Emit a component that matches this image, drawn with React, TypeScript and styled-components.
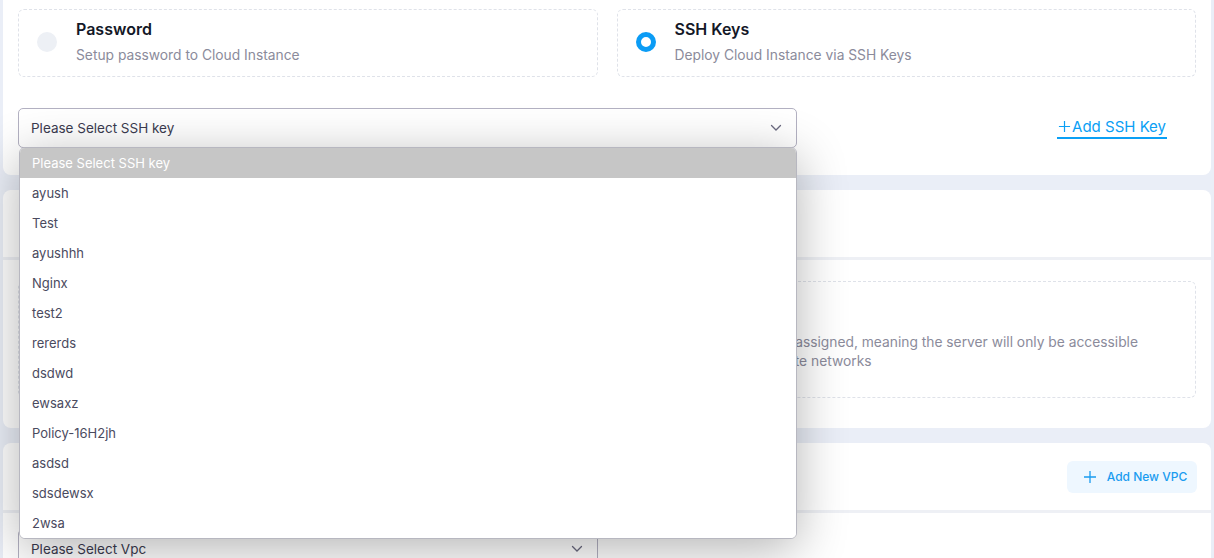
import * as React from 'react'
import styled, { createGlobalStyle } from 'styled-components'

const GlobalStyle = createGlobalStyle`
  body {
    margin: 0;
    background: #eaeef7;
    font-family: Inter, "Open Sans", sans-serif;
  }
`

const Page = styled.div`
  position: relative;
  height: 558px;
  overflow: hidden;
  padding: 0 3px;
  display: flex;
  flex-direction: column;
  gap: 15px;
`

const Card = styled.div<{ $cutTop?: boolean }>`
  background: #fff;
  border-radius: ${p => (p.$cutTop ? '0 0 8px 8px' : '8px')};
  flex-shrink: 0;
`

const CardBody = styled.div<{ $pad: string }>`
  padding: ${p => p.$pad};
`

const CardHeader = styled.div`
  height: 67px;
  padding: 0 15px;
  display: flex;
  align-items: center;
  justify-content: flex-end;
  border-bottom: 3px solid #eef0f5;
`

const Options = styled.div<{ $height: number }>`
  display: grid;
  grid-template-columns: 1fr 1fr;
  gap: 19px;
  & > * {
    height: ${p => p.$height}px;
  }
`

const OptionBox = styled.div`
  box-sizing: border-box;
  border: 1px dashed #dfe2e9;
  border-radius: 6px;
  display: flex;
  align-items: center;
  padding: 0 40px 2px 18px;
  gap: 19px;
`

const Radio = styled.span<{ $checked?: boolean }>`
  box-sizing: border-box;
  width: 20px;
  height: 20px;
  border-radius: 50%;
  flex-shrink: 0;
  background: ${p => (p.$checked ? '#fff' : '#edf0f5')};
  border: ${p => (p.$checked ? '5px solid #0b9cf5' : 'none')};
`

const OptionText = styled.div`
  display: flex;
  flex-direction: column;
  gap: 7px;
`

const OptionTitle = styled.div`
  font-size: 16px;
  line-height: 19px;
  font-weight: 600;
  color: #141827;
`

const OptionDesc = styled.div`
  font-size: 13.8px;
  line-height: 19px;
  color: #8b8b9b;
`

const SelectRow = styled.div`
  display: flex;
  align-items: center;
  margin-top: 31px;
`

const Select = styled.div<{ $width: number }>`
  box-sizing: border-box;
  width: ${p => p.$width}px;
  height: 40px;
  border: 1px solid #b3b1c2;
  border-radius: 5px;
  padding: 0 14px 0 12px;
  display: flex;
  align-items: center;
  justify-content: space-between;
  font-size: 13.5px;
  color: #3b3b50;
`

const AddLink = styled.a`
  margin-left: auto;
  margin-right: 29px;
  font-size: 15px;
  color: #0ba0f5;
  border-bottom: 2px solid #0ba0f5;
  padding: 0 1px 1px;
  text-decoration: none;
  display: flex;
  align-items: center;
  gap: 1px;
`

const Dropdown = styled.ul`
  position: absolute;
  top: 147px;
  left: 19px;
  width: 778px;
  margin: 0;
  padding: 0;
  list-style: none;
  box-sizing: border-box;
  background: #fff;
  border: 1px solid #b7b7c0;
  border-radius: 6px;
  overflow: hidden;
  box-shadow: 0 10px 50px rgba(0, 0, 0, 0.3);
  z-index: 10;
`

const Item = styled.li<{ $active?: boolean }>`
  height: 30px;
  padding-left: 12px;
  display: flex;
  align-items: center;
  font-size: 13px;
  background: ${p => (p.$active ? '#c6c6c6' : '#fff')};
  color: ${p => (p.$active ? '#fff' : '#4a4a5e')};
`

const AddButton = styled.button`
  width: 130px;
  height: 32px;
  margin-right: -1px;
  border: none;
  border-radius: 6px;
  background: #eef7ff;
  color: #1a9cf0;
  font-family: inherit;
  font-size: 12px;
  font-weight: 500;
  display: flex;
  align-items: center;
  justify-content: center;
  gap: 10px;
  padding: 0 0 0 6px;
`

const Chevron = () => (
  <svg width="12" height="8" viewBox="0 0 12 8" fill="none">
    <path d="M1.5 1.5L6 6L10.5 1.5" stroke="#6b6a80" strokeWidth="1.3" strokeLinecap="round" />
  </svg>
)

const Plus = ({ size }: { size: number }) => (
  <svg width={size} height={size} viewBox="0 0 14 14" fill="none">
    <path d="M7 1V13M1 7H13" stroke="currentColor" strokeWidth="1.3" />
  </svg>
)

const keys = [
  'ayush', 'Test', 'ayushhh', 'Nginx', 'test2', 'rererds', 'dsdwd',
  'ewsaxz', 'Policy-16H2jh', 'asdsd', 'sdsdewsx', '2wsa',
]

export default function App() {
  return (
    <>
      <GlobalStyle />
      <Page>
        <Card $cutTop>
          <CardBody $pad="9px 15px 27px">
            <Options $height={68}>
              <OptionBox>
                <Radio />
                <OptionText>
                  <OptionTitle>Password</OptionTitle>
                  <OptionDesc>Setup password to Cloud Instance</OptionDesc>
                </OptionText>
              </OptionBox>
              <OptionBox>
                <Radio $checked />
                <OptionText>
                  <OptionTitle>SSH Keys</OptionTitle>
                  <OptionDesc>Deploy Cloud Instance via SSH Keys</OptionDesc>
                </OptionText>
              </OptionBox>
            </Options>
            <SelectRow>
              <Select $width={779}>
                Please Select SSH key
                <Chevron />
              </Select>
              <AddLink>
                <Plus size={13} />
                Add SSH Key
              </AddLink>
            </SelectRow>
          </CardBody>
        </Card>

        <Card>
          <CardHeader />
          <CardBody $pad="21px 15px 30px">
            <Options $height={117}>
              <OptionBox>
                <Radio $checked />
              </OptionBox>
              <OptionBox>
                <Radio />
                <OptionText>
                  <OptionTitle>Private IP</OptionTitle>
                  <OptionDesc>
                    Public IP won't be assigned, meaning the server will only be accessible
                    through your private networks
                  </OptionDesc>
                </OptionText>
              </OptionBox>
            </Options>
          </CardBody>
        </Card>

        <Card>
          <CardHeader>
            <AddButton>
              <Plus size={14} />
              Add New VPC
            </AddButton>
          </CardHeader>
          <CardBody $pad="16px 15px 30px">
            <Select $width={580}>
              Please Select Vpc
              <Chevron />
            </Select>
          </CardBody>
        </Card>

        <Dropdown>
          <Item $active>Please Select SSH key</Item>
          {keys.map(k => (
            <Item key={k}>{k}</Item>
          ))}
        </Dropdown>
      </Page>
    </>
  )
}
